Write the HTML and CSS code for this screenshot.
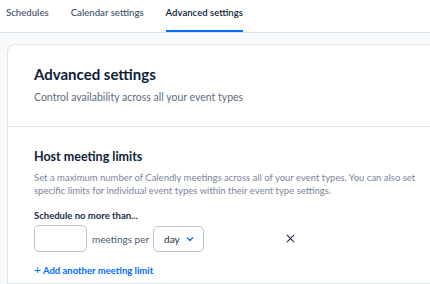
FILE: index.html
```html
<!DOCTYPE html>
<html lang="en">
<head>
  <meta charset="UTF-8" />
  <title>Advanced settings</title>
  <link rel="stylesheet" href="styles.css">
</head>
<body>
  <nav class="tabs">
    <a class="tab">Schedules</a>
    <a class="tab">Calendar settings</a>
    <a class="tab active">Advanced settings</a>
  </nav>

  <div class="page">
    <div class="card">
      <div class="card-head">
        <h1>Advanced settings</h1>
        <p class="subtitle">Control availability across all your event types</p>
      </div>

      <div class="section">
        <h2>Host meeting limits</h2>
        <p class="desc">Set a maximum number of Calendly meetings across all of your event types. You can also set specific limits for individual event types within their event type settings.</p>

        <div class="field-label">Schedule no more than...</div>
        <div class="limit-row">
          <input type="text" class="count" />
          <span class="per">meetings per</span>
          <div class="select">
            day
            <svg width="8" height="6" viewBox="0 0 8 6"><path d="M1 1.5 L4 4.5 L7 1.5" fill="none" stroke="#006bff" stroke-width="1.3"/></svg>
          </div>
          <button class="remove" aria-label="Remove">
            <svg width="9" height="9" viewBox="0 0 10 10"><path d="M1 1 L9 9 M9 1 L1 9" stroke="#1a2b42" stroke-width="1.2"/></svg>
          </button>
        </div>

        <a class="add-link"><span class="plus">+</span> Add another meeting limit</a>
      </div>
    </div>
  </div>
</body>
</html>
```

FILE: styles.css
```css
* {
  box-sizing: border-box;
  margin: 0;
  padding: 0;
}

html,
body {
  height: 100%;
  overflow: hidden;
}

body {
  font-family: Lato, "Open Sans", sans-serif;
  background-color: #fff;
  color: #1a2b42;
}

.tabs {
  display: flex;
  gap: 22px;
  padding-left: 6px;
  height: 33px;
  border-bottom: 1px solid #dde3eb;
}

.tab {
  display: block;
  font-size: 9.6px;
  font-weight: 600;
  color: #4d5b70;
  line-height: 25px;
  border-bottom: 2px solid transparent;
  height: 32px;
}

.tab.active {
  color: #0b1e36;
  border-bottom-color: #006bff;
}

.page {
  background-color: #f9fafb;
  padding: 11px 0 0 7px;
  height: 251px;
}

.card {
  background-color: #fff;
  border: 1px solid #dfe4eb;
  border-right: none;
  border-radius: 8px 0 0 0;
  height: 100%;
}

.card-head {
  padding: 19px 26px 0;
  height: 82px;
  border-bottom: 1px solid #dfe4eb;
}

h1 {
  font-size: 15px;
  font-weight: 700;
  color: #0b1e36;
  line-height: 20px;
}

.subtitle {
  margin-top: 7px;
  font-size: 10.5px;
  color: #5e6c80;
}

.section {
  padding: 22px 4px 0 26px;
}

h2 {
  font-size: 12.5px;
  font-weight: 700;
  color: #0b1e36;
  line-height: 16px;
}

.desc {
  margin-top: 6px;
  font-size: 9.5px;
  line-height: 13px;
  color: #7a8597;
}

.field-label {
  margin-top: 13px;
  font-size: 9.5px;
  font-weight: 700;
  color: #1a2b42;
}

.limit-row {
  display: flex;
  align-items: center;
  margin-top: 4px;
}

.count {
  width: 53px;
  height: 27px;
  border: 1px solid #b9c3d0;
  border-radius: 5px;
}

.per {
  margin-left: 5px;
  font-size: 10px;
  color: #4d5b70;
}

.select {
  display: flex;
  align-items: center;
  gap: 6px;
  margin-left: 4px;
  width: 51px;
  height: 26px;
  padding-left: 10px;
  border: 1px solid #b9c3d0;
  border-radius: 5px;
  font-size: 10px;
  color: #1a2b42;
}

.remove {
  margin-left: 82px;
  width: 9px;
  height: 9px;
  border: none;
  background: none;
  display: flex;
}

.add-link {
  display: block;
  margin-top: 10px;
  font-size: 9.5px;
  font-weight: 700;
  color: #006bff;
}

.plus {
  font-size: 12px;
  font-weight: 400;
}
```
